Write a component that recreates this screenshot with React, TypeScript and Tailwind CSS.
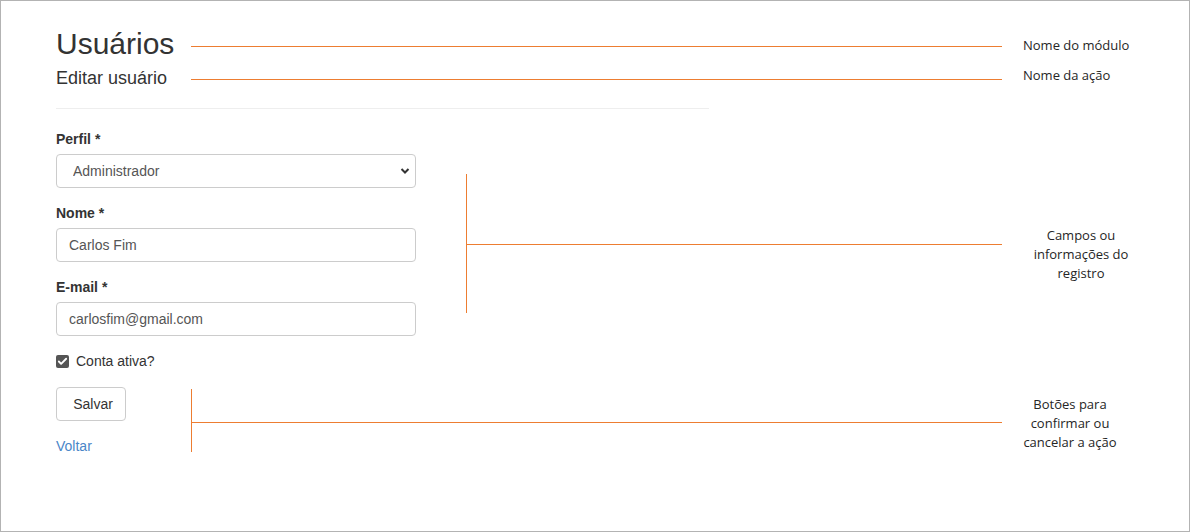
import { Check } from 'lucide-react';

const ORANGE = 'bg-[#ed7d31]';

function Note({ children, className = '' }: { children: React.ReactNode; className?: string }) {
  return (
    <div className={`font-['Open_Sans',sans-serif] text-[13px] leading-[19px] text-[#262626] ${className}`}>
      {children}
    </div>
  );
}

function Field({ label, children }: { label: string; children: React.ReactNode }) {
  return (
    <div className="mb-[15px]">
      <label className="mb-[5px] block text-[14px] font-bold leading-[20px] text-[#333]">{label}</label>
      {children}
    </div>
  );
}

export default function App() {
  return (
    <div className="h-[532px] w-[1190px] overflow-hidden border border-[#b3b3b3] bg-white font-['Liberation_Sans',Arial,sans-serif] text-[#333]">
      <div className="pl-[55px] pt-[26px]">
        {/* Module name */}
        <div className="flex items-start">
          <h1 className="w-[135px] shrink-0 text-[30px] leading-[33px] text-[#333]">Usuários</h1>
          <div className={`mt-[19px] h-px w-[811px] shrink-0 ${ORANGE}`} />
          <Note className="ml-[21px] mt-[9px]">Nome do módulo</Note>
        </div>

        {/* Action name */}
        <div className="mt-[8px] flex items-start">
          <h2 className="w-[135px] shrink-0 text-[18px] leading-[20px] text-[#333]">Editar usuário</h2>
          <div className={`mt-[11px] h-px w-[811px] shrink-0 ${ORANGE}`} />
          <Note className="ml-[21px] mt-[-2px]">Nome da ação</Note>
        </div>

        <div className="mt-[20px] h-px w-[653px] bg-[#eee]" />

        {/* Fields */}
        <div className="mt-[20px] flex items-start">
          <form className="w-[360px] shrink-0">
            <Field label="Perfil *">
              <div className="relative">
                <select
                  defaultValue="adm"
                  className="h-[34px] w-full appearance-none rounded-[4px] border border-[#ccc] bg-white pl-[16px] text-[14px] text-[#555] outline-none"
                >
                  <option value="adm">Administrador</option>
                </select>
                <svg
                  className="pointer-events-none absolute right-[6px] top-[13px]"
                  width="10"
                  height="8"
                  viewBox="0 0 10 8"
                >
                  <path d="M1.5 2 L5 5.5 L8.5 2" fill="none" stroke="#333" strokeWidth="2" />
                </svg>
              </div>
            </Field>
            <Field label="Nome *">
              <input
                defaultValue="Carlos Fim"
                className="h-[34px] w-full rounded-[4px] border border-[#ccc] px-[12px] text-[14px] text-[#555] outline-none"
              />
            </Field>
            <Field label="E-mail *">
              <input
                defaultValue="carlosfim@gmail.com"
                className="h-[34px] w-full rounded-[4px] border border-[#ccc] px-[12px] text-[14px] text-[#555] outline-none"
              />
            </Field>
          </form>
          <div className={`ml-[50px] mt-[45px] flex h-[139px] w-px shrink-0 ${ORANGE}`} />
          <div className={`mt-[115px] h-px w-[535px] shrink-0 ${ORANGE}`} />
          <Note className="mt-[97px] w-[158px] text-center">
            Campos ou
            <br />
            informações do
            <br />
            registro
          </Note>
        </div>

        {/* Active checkbox */}
        <div className="flex h-[20px] items-center">
          <span className="flex h-[13px] w-[13px] items-center justify-center rounded-[2px] bg-[#555]">
            <Check size={11} strokeWidth={4} color="#fff" />
          </span>
          <span className="ml-[7px] text-[14px] text-[#333]">Conta ativa?</span>
        </div>

        {/* Actions */}
        <div className="mt-[16px] flex items-start">
          <div className="w-[135px] shrink-0">
            <button className="flex h-[34px] w-[70px] items-center justify-center rounded-[4px] border border-[#ccc] bg-white pl-[4px] text-[14px] text-[#333]">
              Salvar
            </button>
            <a href="#" className="mt-[15px] block text-[14px] leading-[20px] text-[#4a86c8]">
              Voltar
            </a>
          </div>
          <div className={`mt-[2px] h-[63px] w-px shrink-0 ${ORANGE}`} />
          <div className={`mt-[35px] h-px w-[810px] shrink-0 ${ORANGE}`} />
          <Note className="mt-[8px] w-[136px] text-center">
            Botões para
            <br />
            confirmar ou
            <br />
            cancelar a ação
          </Note>
        </div>
      </div>
    </div>
  );
}
